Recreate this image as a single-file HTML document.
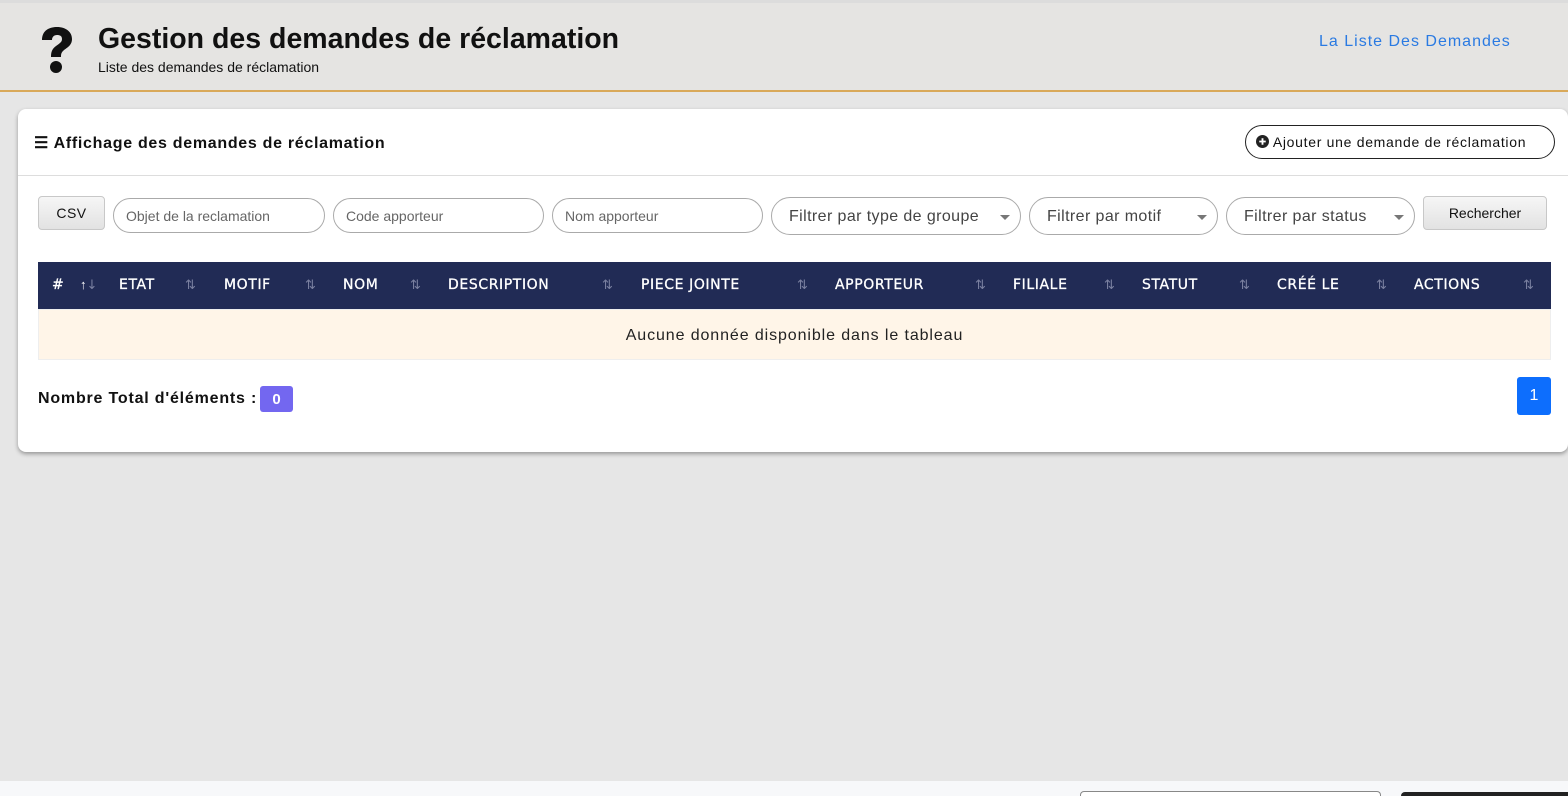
<!DOCTYPE html>
<html><head><meta charset="utf-8"><style>
*{box-sizing:border-box;margin:0;padding:0}
html,body{width:1568px;height:796px;overflow:hidden}
body{background:#e6e6e6;font-family:"Liberation Sans",sans-serif;position:relative;color:#111}
.a{position:absolute;white-space:nowrap}
.hdr{position:absolute;left:0;top:0;width:1568px;height:92px;background:#e5e4e2;border-top:3px solid #dcdcdc;border-bottom:2px solid #d9a95a}
.card{position:absolute;left:18px;top:109px;width:1550px;height:343px;background:#fff;border-radius:8px;box-shadow:0 2px 4px rgba(0,0,0,.35)}
.inp{position:absolute;top:198px;height:35px;border:1px solid #aaa;border-radius:18px;font-size:14px;color:#666;padding:9px 12px}
.sel{position:absolute;top:197px;height:38px;border:1px solid #aaa;border-radius:19px;font-size:16px;color:#444;padding:10px 17px;letter-spacing:.4px}
.sel:after{content:"";position:absolute;right:10px;top:17px;border:5px solid transparent;border-top:5px solid #777}
.btn{position:absolute;background:linear-gradient(#f6f6f6,#e2e2e2);border:1px solid #c8c8c8;border-radius:4px;font-size:14px;text-align:center}
.th{position:absolute;top:262px;left:38px;width:1513px;height:47px;background:#212b55}
.th span{position:absolute;top:15px;color:#fff;letter-spacing:.6px;font-family:"DejaVu Sans",sans-serif;font-size:14px;-webkit-text-stroke:.3px #fff}
.th i{position:absolute;top:15px;color:#7a80a0;font-style:normal;font-size:13px}
</style></head><body>
<div class="hdr"></div>
<svg class="a" style="left:38px;top:26px" width="38" height="48" viewBox="0 0 38 48"><path d="M4 14 C4 4 12 1 19 1 C28 1 34 6 34 13 C34 20 28 22 25 25 C23 27 23 29 23 31 H13 C13 26 14 23 18 20 C22 17 24 16 24 13 C24 10 22 9 19 9 C16 9 14 11 14 14 Z" fill="#111"/><circle cx="18" cy="41" r="6" fill="#111"/></svg>
<div class="a" style="left:98px;top:23px;font-size:28.5px;font-weight:bold">Gestion des demandes de réclamation</div>
<div class="a" style="left:98px;top:59px;font-size:14px">Liste des demandes de réclamation</div>
<div class="a" style="left:1319px;top:33px;font-size:16px;color:#2a7ae2;letter-spacing:1px">La Liste Des Demandes</div>
<div class="card"></div>
<div class="a" style="left:18px;top:175px;width:1550px;border-top:1px solid #ddd"></div>
<div class="a" style="left:34px;top:133px;font-size:16px;font-weight:bold;letter-spacing:.7px">☰ Affichage des demandes de réclamation</div>
<div class="a" style="left:1245px;top:125px;width:310px;height:34px;border:1.5px solid #222;border-radius:17px;font-size:14px;padding:8px 10px;letter-spacing:.7px"><svg width="13" height="13" viewBox="0 0 14 14" style="vertical-align:-1px"><circle cx="7" cy="7" r="7" fill="#222"/><path d="M7 3.5v7M3.5 7h7" stroke="#fff" stroke-width="2"/></svg> Ajouter une demande de réclamation</div>
<div class="btn" style="left:38px;top:196px;width:67px;height:34px;padding-top:8px;letter-spacing:.5px">CSV</div>
<div class="inp" style="left:113px;width:212px">Objet de la reclamation</div>
<div class="inp" style="left:333px;width:211px">Code apporteur</div>
<div class="inp" style="left:552px;width:211px">Nom apporteur</div>
<div class="sel" style="left:771px;width:250px">Filtrer par type de groupe</div>
<div class="sel" style="left:1029px;width:189px">Filtrer par motif</div>
<div class="sel" style="left:1226px;width:189px">Filtrer par status</div>
<div class="btn" style="left:1423px;top:196px;width:124px;height:34px;padding-top:8px">Rechercher</div>
<div class="th">
<span style="left:14px">#</span><i style="left:42px;color:#fff">↑<span style="position:static;color:#7a80a0;font-size:13px;font-weight:normal;-webkit-text-stroke:0">↓</span></i>
<span style="left:81px">ETAT</span><i style="left:147px">⇅</i>
<span style="left:186px">MOTIF</span><i style="left:267px">⇅</i>
<span style="left:305px">NOM</span><i style="left:372px">⇅</i>
<span style="left:410px">DESCRIPTION</span><i style="left:564px">⇅</i>
<span style="left:603px">PIECE JOINTE</span><i style="left:759px">⇅</i>
<span style="left:797px">APPORTEUR</span><i style="left:937px">⇅</i>
<span style="left:975px">FILIALE</span><i style="left:1066px">⇅</i>
<span style="left:1104px">STATUT</span><i style="left:1201px">⇅</i>
<span style="left:1239px">CRÉÉ LE</span><i style="left:1338px">⇅</i>
<span style="left:1376px">ACTIONS</span><i style="left:1485px">⇅</i>
</div>
<div class="a" style="left:38px;top:309px;width:1513px;height:51px;background:#fff5e8;border:1px solid #eee;text-align:center;font-size:16px;padding-top:17px;color:#222;letter-spacing:.9px">Aucune donnée disponible dans le tableau</div>
<div class="a" style="left:38px;top:390px;font-size:16px;font-weight:bold;letter-spacing:.8px">Nombre Total d'éléments :</div>
<div class="a" style="left:260px;top:386px;width:33px;height:26px;background:#7367f0;border-radius:3px;color:#fff;font-weight:bold;text-align:center;padding-top:5px;font-size:15px">0</div>
<div class="a" style="left:1517px;top:377px;width:34px;height:38px;background:#0d6efd;border-radius:3px;color:#fff;text-align:center;padding-top:10px;font-size:16px">1</div>
<div class="a" style="left:0;top:781px;width:1568px;height:15px;background:#f7f8fa"></div>
<div class="a" style="left:1080px;top:791px;width:301px;height:5px;border:1px solid #888;border-bottom:none;border-radius:4px 4px 0 0;background:#fff"></div>
<div class="a" style="left:1401px;top:792px;width:167px;height:4px;background:#222;border-radius:4px 0 0 0"></div>
</body></html>
